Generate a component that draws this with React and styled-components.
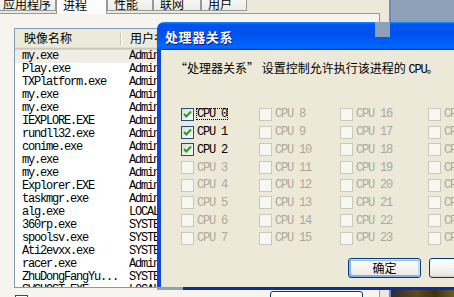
import React from 'react';
import styled, { createGlobalStyle } from 'styled-components';

const CJK = `"Noto Sans CJK SC", "Noto Sans", sans-serif`;
const MONO = `"Liberation Mono", "DejaVu Sans Mono", monospace`;

const Global = createGlobalStyle`
  html, body { margin: 0; padding: 0; width: 454px; height: 297px; overflow: hidden; background: #ECE9D8; }
  #root { width: 454px; height: 297px; }
`;

const Screen = styled.div`
  position: relative;
  width: 454px;
  height: 297px;
  overflow: hidden;
  display: flex;
  background: #ECE9D8;
  font-family: ${CJK};
  font-size: 12px;
  color: #000;
`;

const TaskWindow = styled.div`
  width: 389px;
  flex: none;
  border-right: 2px solid #7286C9;
  display: flex;
  flex-direction: column;
  background: #ECE9D8;
`;

const TabStrip = styled.div`
  display: flex;
  align-items: flex-start;
  height: 13px;
  margin-left: -4px;
  position: relative;
  z-index: 1;
`;

const Tab = styled.div`
  box-sizing: border-box;
  width: ${p => p.$w}px;
  height: ${p => (p.$active ? 14 : 11)}px;
  padding: 0 0 ${p => (p.$active ? 3 : 0)}px 6px;
  display: flex;
  align-items: flex-end;
  border: 1px solid #919B9C;
  border-top: none;
  border-bottom: ${p => (p.$active ? 'none' : '1px solid #919B9C')};
  border-radius: 0;
  background: ${p => (p.$active ? '#FCFCFE' : 'linear-gradient(#F7F6F2, #ECEBE5)')};
  font-size: 12px;
  line-height: 12px;
  white-space: nowrap;
  overflow: hidden;
`;

const TabPanel = styled.div`
  margin-left: -1px;
  width: 381px;
  box-sizing: border-box;
  flex: 1;
  border: 1px solid #919B9C;
  border-bottom: none;
  background: #F5F4EF;
  padding: 14px 0 0 14px;
  display: flex;
  flex-direction: column;
`;

const ListBox = styled.div`
  box-sizing: border-box;
  width: 349px;
  height: 260px;
  flex: none;
  border: 1px solid #7F9DB9;
  background: #fff;
  overflow: hidden;
`;

const Header = styled.div`
  box-sizing: border-box;
  height: 21px;
  display: flex;
  background: #EBEADB;
  box-shadow: inset 0 -1px #D6D2C2, inset 0 -2px #CBC7B8, inset 0 -3px #E2DECD;
`;

const HeaderCell = styled.div`
  position: relative;
  box-sizing: border-box;
  width: ${p => p.$w}px;
  flex: none;
  padding-left: 9px;
  line-height: 18px;
  font-size: 12px;
  white-space: nowrap;
  &::after {
    content: '';
    position: absolute;
    right: 0;
    top: 4px;
    width: 1px;
    height: 12px;
    background: #C7C5B2;
    box-shadow: 1px 0 #fff;
  }
`;

const Row = styled.div`
  display: flex;
  height: 13px;
  background: ${p => (p.$hl ? '#EEEDE6' : 'transparent')};
`;

const Cell = styled.div`
  box-sizing: border-box;
  width: ${p => p.$w}px;
  flex: none;
  padding-left: ${p => p.$pad}px;
  font-family: ${MONO};
  font-size: 12px;
  letter-spacing: -1.2px;
  line-height: 13px;
  white-space: nowrap;
  overflow: hidden;
`;

const FooterRow = styled.div`
  width: 349px;
  margin-top: 3px;
  display: flex;
  justify-content: space-between;
  align-items: flex-start;
`;

const MiniCheck = styled.div`
  width: 13px;
  height: 13px;
  box-sizing: border-box;
  margin: 4px 0 0 1px;
  border: 1px solid #1C5180;
  background: #fff;
`;

const PanelButton = styled.div`
  width: 93px;
  height: 23px;
  box-sizing: border-box;
  border: 1px solid #003C74;
  border-radius: 3px;
  background: linear-gradient(180deg, #fff, #ECEBE6 86%, #D6D0C5);
`;

const Desktop = styled.div`
  flex: 1;
  display: flex;
  flex-direction: column;
`;

const DeskBand = styled.div`
  height: 22px;
  background: #8DA2B6;
`;

const DeskPhoto = styled.div`
  flex: 1;
  background: linear-gradient(90deg, #2B2A3A 0%, #5A4A1E 40%, #3A3312 70%, #6A5A2A 100%);
`;

const Dialog = styled.div`
  position: absolute;
  left: 157px;
  top: 22px;
  width: 356px;
  height: 268px;
  display: flex;
  flex-direction: column;
`;

const TitleBar = styled.div`
  height: 28px;
  flex: none;
  box-sizing: border-box;
  border-radius: 7px 7px 0 0;
  background: linear-gradient(180deg, #0997FF, #0053EE 8%, #0050EE 40%, #0066FF 88%, #0066FF 93%, #005BFF 95%, #003DD7 96%, #003DD7);
  display: flex;
  align-items: center;
  padding-left: 8px;
  color: #fff;
  font-weight: 700;
  font-size: 13px;
  letter-spacing: 0.6px;
  text-shadow: 1px 1px #0F1089;
`;

const Frame = styled.div`
  flex: 1;
  display: flex;
  flex-direction: column;
  border-left: 4px solid #0A47DE;
  background: #ECE9D8;
  padding: 11px 0 9px 14px;
`;

const BottomEdge = styled.div`
  height: 3px;
  flex: none;
  background: linear-gradient(90deg, #8DA2B5 0 26px, #0B2FA0 26px);
`;

const DialogText = styled.div`
  line-height: 14px;
  font-size: 12px;
  white-space: nowrap;
`;

const Latin = styled.span`
  font-family: ${MONO};
  letter-spacing: -1.2px;
`;

const CpuGrid = styled.div`
  display: grid;
  grid-template-columns: 78px 81px 88px 1fr;
  grid-auto-rows: 17.7px;
  grid-auto-flow: column;
  grid-template-rows: repeat(8, 17.7px);
  margin: 28.6px 0 0 6px;
`;

const CheckItem = styled.div`
  display: flex;
  align-items: center;
  gap: 2px;
`;

const Box = styled.div`
  width: 13px;
  height: 13px;
  box-sizing: border-box;
  flex: none;
  border: 1px solid ${p => (p.$disabled ? '#CAC8BB' : '#1C5180')};
  background: ${p => (p.$disabled ? '#F7F6F1' : 'linear-gradient(135deg, #DCDCD7, #FFFFFF)')};
  display: flex;
  align-items: center;
  justify-content: center;
`;

const Label = styled.span`
  font-family: ${MONO};
  font-size: 12px;
  letter-spacing: -1.2px;
  line-height: 12px;
  color: ${p => (p.$disabled ? '#ACA899' : '#000')};
  padding: 0 1px;
  outline: ${p => (p.$focus ? '1px dotted #000' : 'none')};
  outline-offset: -1px;
  white-space: nowrap;
`;

const ButtonRow = styled.div`
  margin-top: auto;
  display: flex;
  justify-content: flex-end;
  gap: 8px;
  padding-right: 11px;
`;

const Button = styled.div`
  width: 73px;
  height: 20px;
  box-sizing: border-box;
  border: 1px solid #003C74;
  border-radius: 3px;
  background: linear-gradient(180deg, #fff, #ECEBE6 86%, #D6D0C5);
  box-shadow: ${p => (p.$default
    ? 'inset -1px 1px #CEE7FF, inset 1px 2px #98B8EA, inset -2px 2px #BCD4F6, inset 1px -1px #89ADE4, inset 2px -2px #89ADE4'
    : 'none')};
  display: flex;
  align-items: center;
  justify-content: center;
  font-size: 12px;
  line-height: 12px;
`;

const Artifact = styled.div`
  position: absolute;
  left: 375px;
  top: 22px;
  width: 15px;
  height: 15px;
  background: #8DA2B6;
`;

const tabs = [
  { t: '应用程序', w: 60 },
  { t: '进程', w: 51, active: true },
  { t: '性能', w: 46 },
  { t: '联网', w: 48 },
  { t: '用户', w: 46 },
];

const processes = [
  ['my.exe', 'Administrator'],
  ['Play.exe', 'Administrator'],
  ['TXPlatform.exe', 'Administrator'],
  ['my.exe', 'Administrator'],
  ['my.exe', 'Administrator'],
  ['IEXPLORE.EXE', 'Administrator'],
  ['rundll32.exe', 'Administrator'],
  ['conime.exe', 'Administrator'],
  ['my.exe', 'Administrator'],
  ['my.exe', 'Administrator'],
  ['Explorer.EXE', 'Administrator'],
  ['taskmgr.exe', 'Administrator'],
  ['alg.exe', 'LOCAL SERVICE'],
  ['360rp.exe', 'SYSTEM'],
  ['spoolsv.exe', 'SYSTEM'],
  ['Ati2evxx.exe', 'SYSTEM'],
  ['racer.exe', 'Administrator'],
  ['ZhuDongFangYu...', 'SYSTEM'],
  ['SVCHOST.EXE', 'LOCAL SERVICE'],
];

const Check = () => (
  <svg width="11" height="11" viewBox="0 0 11 11">
    <path d="M2 5 L4.3 7.5 L9 2.5" stroke="#21A121" strokeWidth="2" fill="none" />
  </svg>
);

export default function App() {
  const cpus = Array.from({ length: 32 }, (_, i) => i);
  return (
    <Screen>
      <Global />
      <TaskWindow>
        <TabStrip>
          {tabs.map(t => (
            <Tab key={t.t} $w={t.w} $active={t.active}>{t.t}</Tab>
          ))}
        </TabStrip>
        <TabPanel>
          <ListBox>
            <Header>
              <HeaderCell $w={106}>映像名称</HeaderCell>
              <HeaderCell $w={120}>用户名</HeaderCell>
            </Header>
            {processes.map((p, i) => (
              <Row key={i} $hl={i === 0}>
                <Cell $w={106} $pad={7}>{p[0]}</Cell>
                <Cell $w={120} $pad={8}>{p[1]}</Cell>
              </Row>
            ))}
          </ListBox>
          <FooterRow>
            <MiniCheck />
            <PanelButton />
          </FooterRow>
        </TabPanel>
      </TaskWindow>
      <Desktop>
        <DeskBand />
        <DeskPhoto />
      </Desktop>

      <Dialog>
        <TitleBar>处理器关系</TitleBar>
        <Frame>
          <DialogText>
            “处理器关系” 设置控制允许执行该进程的 <Latin>CPU</Latin>。
          </DialogText>
          <CpuGrid>
            {cpus.map(i => {
              const enabled = i < 3;
              return (
                <CheckItem key={i}>
                  <Box $disabled={!enabled}>{enabled && <Check />}</Box>
                  <Label $disabled={!enabled} $focus={i === 0}>CPU {i}</Label>
                </CheckItem>
              );
            })}
          </CpuGrid>
          <ButtonRow>
            <Button $default>确定</Button>
            <Button>取消</Button>
          </ButtonRow>
        </Frame>
        <BottomEdge />
      </Dialog>
      <Artifact />
    </Screen>
  );
}
